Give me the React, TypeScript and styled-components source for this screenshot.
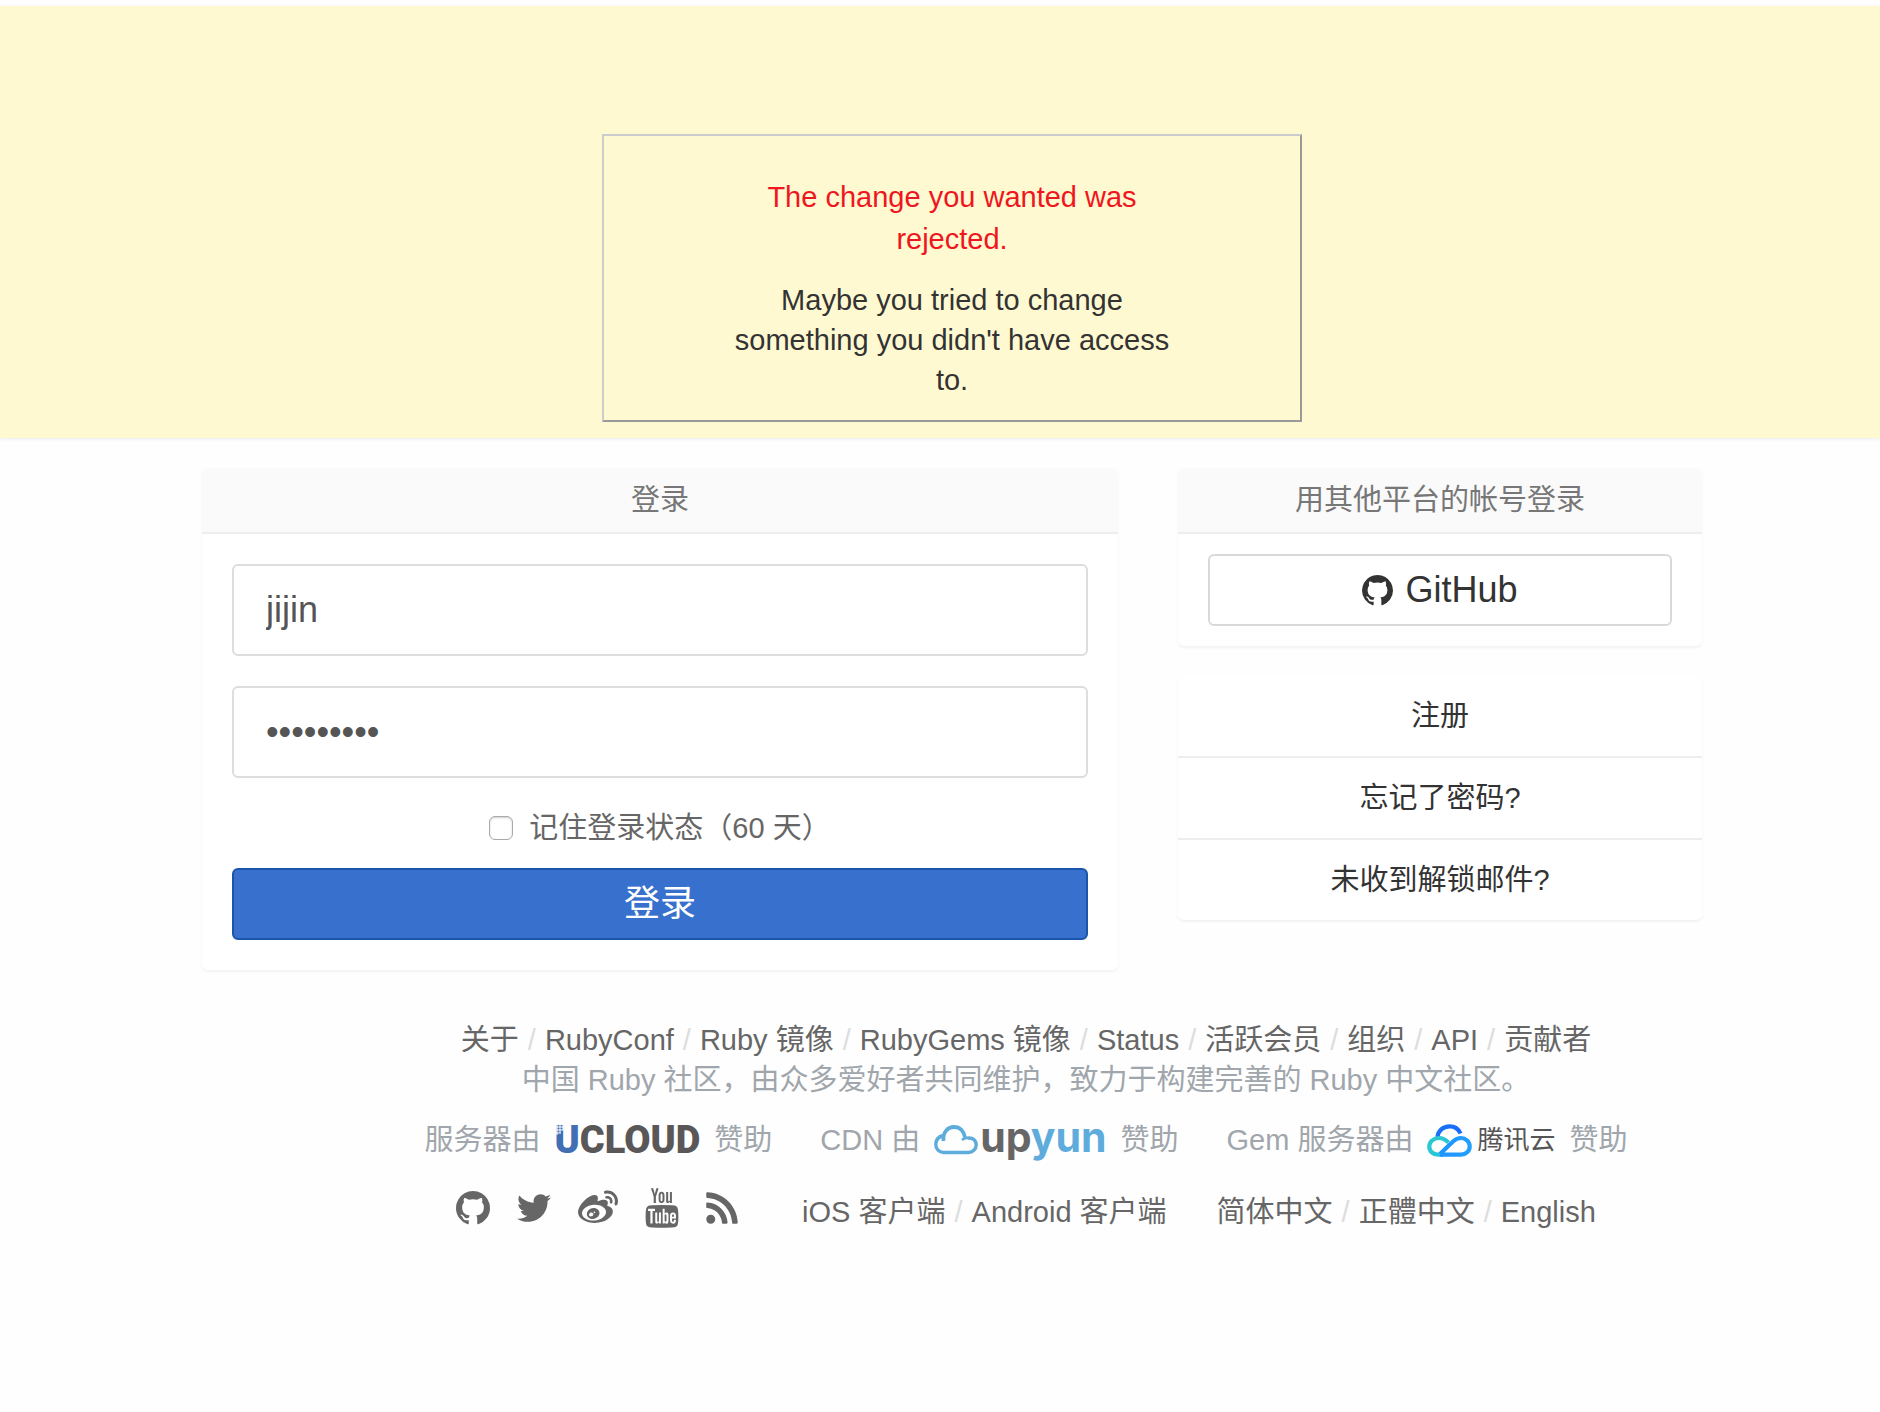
import React from "react";
import styled, { createGlobalStyle } from "styled-components";
import { FaRss, FaTwitter, FaWeibo } from "react-icons/fa";

const GlobalStyle = createGlobalStyle`
  *, *::before, *::after { box-sizing: border-box; }
  body {
    margin: 0;
    background: #fefefe;
    color: #333;
    font-family: "Liberation Sans", Arial, "Noto Sans CJK SC", sans-serif;
    font-size: 29px;
    line-height: 40px;
  }
  input, button { font-family: inherit; }
  a { color: inherit; text-decoration: none; }
`;

const Page = styled.div`
  padding-top: 6px;
`;

const FlashBand = styled.section`
  display: flex;
  justify-content: center;
  padding: 128px 0 16px 24px;
  background: #fff9d1;
  box-shadow: 0 1px 3px rgba(0, 0, 0, 0.08);
`;

const FlashBox = styled.div`
  width: 700px;
  max-width: 100%;
  padding: 40px 120px 20px;
  border: 2px solid;
  border-color: #ccc #999 #999 #ccc;
  text-align: center;
`;

const FlashTitle = styled.h1`
  margin: 0 0 20px;
  color: #ee1620;
  font-size: 29px;
  font-weight: 400;
  line-height: 42px;
`;

const FlashText = styled.p`
  margin: 0;
`;

const Content = styled.div`
  padding: 30px 0 0 24px;
`;

const Container = styled.div`
  max-width: 1500px;
  margin: 0 auto;
`;

const Columns = styled.main`
  display: grid;
  grid-template-columns: minmax(0, 916fr) minmax(0, 524fr);
  align-items: start;
  gap: 60px;
`;

const Sidebar = styled.div`
  display: flex;
  flex-direction: column;
  gap: 30px;
`;

const Card = styled.section`
  overflow: hidden;
  border-radius: 6px;
  background: #fff;
  box-shadow: 0 2px 3px rgba(0, 0, 0, 0.05);
`;

const CardTitle = styled.h2`
  margin: 0;
  padding: 12px 30px;
  border-bottom: 2px solid #eee;
  background: #fafafa;
  color: #777;
  font-size: 29px;
  font-weight: 400;
  text-align: center;
`;

const LoginForm = styled.form`
  display: flex;
  flex-direction: column;
  padding: 30px;
`;

const Field = styled.input`
  width: 100%;
  height: 92px;
  margin-bottom: 30px;
  padding: 0 32px;
  border: 2px solid #ddd;
  border-radius: 6px;
  background: #fff;
  color: #555;
  font-size: 36px;
`;

const Remember = styled.label`
  display: flex;
  align-items: center;
  justify-content: center;
  gap: 16px;
  margin-bottom: 20px;
  color: #666;
`;

const Checkbox = styled.input`
  appearance: none;
  width: 24px;
  height: 24px;
  margin: 0;
  border: 1px solid #aaa;
  border-radius: 6px;
  background: #fff;
  box-shadow: inset 0 1px 2px rgba(0, 0, 0, 0.2);
`;

const Button = styled.button<{ $primary?: boolean }>`
  display: flex;
  align-items: center;
  justify-content: center;
  gap: 12px;
  width: 100%;
  height: 72px;
  padding: 0;
  border: 2px solid ${(p) => (p.$primary ? "#1b55ab" : "#d9d9d9")};
  border-radius: 6px;
  background: ${(p) => (p.$primary ? "#3870cd" : "#fff")};
  color: ${(p) => (p.$primary ? "#fff" : "#333")};
  font-size: 36px;
  line-height: 40px;
`;

const ProviderBody = styled.div`
  padding: 20px 30px;
`;

const LinkRow = styled.a`
  display: block;
  padding: 20px;
  text-align: center;

  & + & {
    border-top: 2px solid #eee;
  }
`;

const Footer = styled.footer`
  display: flex;
  flex-direction: column;
  align-items: center;
  margin-top: 50px;
  padding-left: 148px;
  color: #a0a6ac;
  white-space: nowrap;
`;

const Links = styled.nav`
  display: flex;
  color: #666;

  a + a::before {
    content: "/";
    padding: 0 9px;
    color: #ddd;
  }
`;

const Sponsors = styled.div`
  display: flex;
  gap: 48px;
  margin: 20px 0 26px;
`;

const Sponsor = styled.div`
  display: flex;
  align-items: center;
  gap: 14px;
`;

const Logo = styled.a`
  display: flex;
  align-items: center;
  height: 40px;
`;

const UcloudWord = styled.span`
  position: relative;
  color: #595757;
  font-family: Roboto, "Liberation Sans", sans-serif;
  font-size: 38px;
  font-weight: 900;
`;

const UcloudFirst = styled.span`
  color: #426eb4;
`;

const UcloudDots = styled.svg`
  position: absolute;
  top: 5px;
  left: 0;
  width: 10px;
  height: 10px;
`;

const UpyunWord = styled.span`
  padding: 0 0 6px 2px;
  color: #666;
  font-family: Inter, "Liberation Sans", sans-serif;
  font-size: 41px;
  font-weight: 700;
`;

const UpyunAccent = styled.span`
  color: #5eacdc;
`;

const TencentWord = styled.span`
  margin-left: 5px;
  color: #555;
  font-size: 26px;
`;

const BottomRow = styled.div`
  display: flex;
  align-items: flex-end;
`;

const Social = styled.div`
  display: flex;
  align-items: center;
  gap: 27px;
  height: 46px;
  margin-right: 64px;
  padding-bottom: 2px;
  color: #666;

  a { display: flex; }
`;

const RssMark = styled(FaRss)`
  width: 32px;
  height: 36px;
`;

const LanguageLinks = styled(Links)`
  margin-left: 50px;
`;

const GithubMark = ({ size }: { size: number }) => (
  <svg width={size} height={size} viewBox="128 128 1536 1536" fill="currentColor" aria-hidden="true">
    <path d="M1664 896q0 251-146.500 451.500t-378.500 277.500q-27 5-40-7t-13-30q0-3 .5-76.500t.5-134.500q0-97-52-142 57-6 102.500-18t94-39 81-66.500 53-105 20.500-150.500q0-119-79-206 37-91-8-204-28-9-81 11t-92 44l-38 24q-93-26-192-26t-192 26q-16-11-42.500-27t-83.500-38.500-85-13.500q-45 113-8 204-79 87-79 206 0 85 20.500 150t52.500 105 80.500 67 94 39 102.500 18q-39 36-49 103-21 10-45 15t-57 5-65.500-21.500-55.500-62.500q-19-32-48.500-52t-49.500-24l-20-3q-21 0-29 4.500t-5 11.500 9 14 13 12l7 5q22 10 43.500 38t31.500 51l10 23q13 38 44 61.500t67 30 69.500 7 55.500-3.500l23-4q0 38 .5 88.500t.5 54.500q0 18-13 30t-40 7q-232-77-378.500-277.500t-146.500-451.500q0-209 103-385.500t279.500-279.500 385.500-103 385.500 103 279.500 279.500 103 385.500z" />
  </svg>
);

const YoutubeMark = () => (
  <svg width="34" height="40" viewBox="128 0 1536 1792" fill="currentColor" aria-hidden="true">
    <path d="M1099 1244v211q0 67-39 67-23 0-45-22v-301q22-22 45-22 39 0 39 67zm338 1v46h-90v-46q0-68 45-68t45 68zm-966-218h107v-94h-312v94h105v569h100v-569zm288 569h89v-494h-89v378q-30 42-57 42-18 0-21-21-1-3-1-35v-364h-89v391q0 49 8 73 12 37 58 37 48 0 102-61v54zm429-148v-197q0-73-9-99-17-56-71-56-50 0-93 54v-217h-89v663h89v-48q45 55 93 55 54 0 71-55 9-27 9-100zm338-10v-13h-91q0 51-2 61-7 36-40 36-46 0-46-69v-87h179v-103q0-79-27-116-39-51-106-51-68 0-107 51-28 37-28 116v173q0 79 29 116 39 51 108 51 72 0 108-53 18-27 21-54 2-9 2-58zm-608-913v-210q0-69-43-69t-43 69v210q0 70 43 70t43-70zm719 751q0 234-26 350-14 59-58 99t-102 46q-184 21-555 21t-555-21q-58-6-102.500-46t-57.500-99q-26-112-26-350 0-234 26-350 14-59 58-99t103-47q183-20 554-20t555 20q58 7 102.500 47t57.500 99q26 112 26 350zm-998-1276h102l-121 399v271h-100v-271q-14-74-61-212-37-103-65-187h106l71 263zm370 333v175q0 81-28 118-38 51-106 51-67 0-105-51-28-38-28-118v-175q0-80 28-117 38-51 105-51 68 0 106 51 28 37 28 117zm335-162v499h-91v-55q-53 62-103 62-46 0-59-37-8-24-8-75v-394h91v367q0 33 1 35 3 22 21 22 27 0 57-43v-381h91z" />
  </svg>
);

const UpyunCloud = () => (
  <svg width="44" height="30" viewBox="0 0 44 30" fill="none" stroke="#5eacdc" aria-hidden="true">
    <path d="M9 10.500C4 12 1.800 15.500 1.800 19.500c0 4.500 3.200 8 7.700 8h25c4 0 7.700-3.200 7.700-7.500 0-4.800-4-7.800-8.500-6.800" strokeWidth="3.400" />
    <path d="M9.500 16C8.500 7.500 13.500 2 20 2c6 0 10 4 11 10.500" strokeWidth="3.800" />
    <path d="M28 15c2-2 4.500-2.500 7-1.800" strokeWidth="2.600" />
  </svg>
);

const TencentCloud = () => (
  <svg width="45" height="33" viewBox="0 0 45 33" fill="none" strokeWidth="4.200" aria-hidden="true">
    <defs>
      <linearGradient id="cloudTop" x1="0" x2="1" y1="0" y2="0">
        <stop offset="0" stopColor="#1a72f0" />
        <stop offset="1" stopColor="#1769ff" />
      </linearGradient>
      <linearGradient id="cloudLeft" x1="0" x2="1" y1="0" y2="1">
        <stop offset="0" stopColor="#2ccad0" />
        <stop offset="1" stopColor="#27c2dc" />
      </linearGradient>
      <linearGradient id="cloudRight" x1="0" x2="1" y1="0" y2="0">
        <stop offset="0" stopColor="#1f94ff" />
        <stop offset="1" stopColor="#229fff" />
      </linearGradient>
    </defs>
    <path d="M10.500 13C11 7 16 2.300 22.500 2.300c5 0 9 2.600 11 7.200" stroke="url(#cloudTop)" />
    <path d="M21.500 18.500C18.500 15.700 15.500 14 12 14 6.500 14 2.300 17.800 2.300 22.400c0 4.800 3.900 8.300 8.700 8.300h5" stroke="url(#cloudLeft)" />
    <path d="M13 30.700h21c5 0 8.700-3.600 8.700-8.300 0-4.800-3.900-8.400-8.700-8.400-3.500 0-5.800 1.400-8 3.500L13 30" stroke="url(#cloudRight)" />
  </svg>
);

const footerLinks = ["关于", "RubyConf", "Ruby 镜像", "RubyGems 镜像", "Status", "活跃会员", "组织", "API", "贡献者"];
const accountLinks = ["注册", "忘记了密码?", "未收到解锁邮件?"];
const clientLinks = ["iOS 客户端", "Android 客户端"];
const languages = ["简体中文", "正體中文", "English"];

const linkItems = (items: string[]) =>
  items.map((text) => (
    <a href="#" key={text}>
      {text}
    </a>
  ));

export default function App() {
  return (
    <Page lang="zh-CN">
      <GlobalStyle />
      <FlashBand>
        <FlashBox role="alert">
          <FlashTitle>The change you wanted was rejected.</FlashTitle>
          <FlashText>Maybe you tried to change something you didn't have access to.</FlashText>
        </FlashBox>
      </FlashBand>

      <Content>
        <Container>
          <Columns>
            <Card>
              <CardTitle>登录</CardTitle>
              <LoginForm onSubmit={(e) => e.preventDefault()}>
                <Field type="text" aria-label="用户名" defaultValue="jijin" />
                <Field type="password" aria-label="密码" defaultValue="ruby12345" />
                <Remember>
                  <Checkbox type="checkbox" />
                  记住登录状态（60 天）
                </Remember>
                <Button type="submit" $primary>
                  登录
                </Button>
              </LoginForm>
            </Card>

            <Sidebar>
              <Card>
                <CardTitle>用其他平台的帐号登录</CardTitle>
                <ProviderBody>
                  <Button type="button">
                    <GithubMark size={31} />
                    GitHub
                  </Button>
                </ProviderBody>
              </Card>
              <Card>
                {accountLinks.map((text) => (
                  <LinkRow href="#" key={text}>
                    {text}
                  </LinkRow>
                ))}
              </Card>
            </Sidebar>
          </Columns>

          <Footer>
            <Links>{linkItems(footerLinks)}</Links>
            <div>中国 Ruby 社区，由众多爱好者共同维护，致力于构建完善的 Ruby 中文社区。</div>
            <Sponsors>
              <Sponsor>
                服务器由
                <Logo href="#">
                  <UcloudWord>
                    <UcloudFirst>U</UcloudFirst>CLOUD
                    <UcloudDots viewBox="0 0 10 10" stroke="#fefefe" aria-hidden="true">
                      <path d="M0 2h10M0 5h8M0 8h6M2 0v10M5 0v8M8 0v5" />
                    </UcloudDots>
                  </UcloudWord>
                </Logo>
                赞助
              </Sponsor>
              <Sponsor>
                CDN 由
                <Logo href="#">
                  <UpyunCloud />
                  <UpyunWord>
                    up<UpyunAccent>yun</UpyunAccent>
                  </UpyunWord>
                </Logo>
                赞助
              </Sponsor>
              <Sponsor>
                Gem 服务器由
                <Logo href="#">
                  <TencentCloud />
                  <TencentWord>腾讯云</TencentWord>
                </Logo>
                赞助
              </Sponsor>
            </Sponsors>
            <BottomRow>
              <Social>
                <a href="#" aria-label="GitHub"><GithubMark size={34} /></a>
                <a href="#" aria-label="Twitter"><FaTwitter size={34} /></a>
                <a href="#" aria-label="Weibo"><FaWeibo size={40} /></a>
                <a href="#" aria-label="YouTube"><YoutubeMark /></a>
                <a href="#" aria-label="RSS"><RssMark /></a>
              </Social>
              <Links>{linkItems(clientLinks)}</Links>
              <LanguageLinks>{linkItems(languages)}</LanguageLinks>
            </BottomRow>
          </Footer>
        </Container>
      </Content>
    </Page>
  );
}
